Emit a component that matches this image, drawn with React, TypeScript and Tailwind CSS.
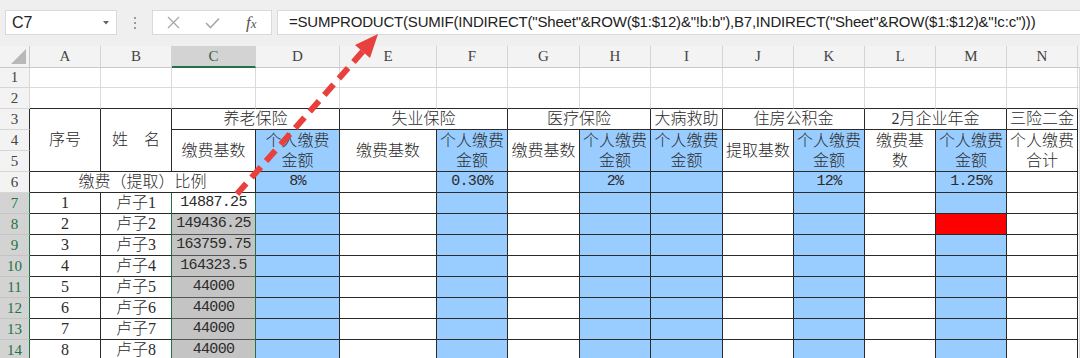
import React from 'react';
import { twMerge } from 'tailwind-merge';

const serifCjk = "font-['Liberation_Serif','Noto_Sans_CJK_SC',serif]";
const mono = "font-['Liberation_Mono','Noto_Sans_CJK_SC',monospace]";

const COLS = ['A', 'B', 'C', 'D', 'E', 'F', 'G', 'H', 'I', 'J', 'K', 'L', 'M', 'N'];

const data = [
  { n: '1', name: '卢子1', base: '14887.25' },
  { n: '2', name: '卢子2', base: '149436.25' },
  { n: '3', name: '卢子3', base: '163759.75' },
  { n: '4', name: '卢子4', base: '164323.5' },
  { n: '5', name: '卢子5', base: '44000' },
  { n: '6', name: '卢子6', base: '44000' },
  { n: '7', name: '卢子7', base: '44000' },
  { n: '8', name: '卢子8', base: '44000' },
];

function Cell({ className, children }: { className?: string; children?: React.ReactNode }) {
  return (
    <div
      className={twMerge(
        'flex flex-col items-center justify-center overflow-hidden whitespace-nowrap border-r border-b border-[#2a2a2a] text-[16px] font-light leading-[20px] text-[#2b2b2b]',
        serifCjk,
        className,
      )}
    >
      {children}
    </div>
  );
}

function RowHead({ n, active }: { n: number; active?: boolean }) {
  return (
    <div
      className={twMerge(
        "flex items-center justify-center border-r border-b border-[#d6d6d6] bg-[#f3f3f3] text-[15px] text-[#444] font-['Liberation_Serif',serif]",
        n >= 3 && n <= 6 && 'border-r-[#2a2a2a]',
        active && 'bg-[#d3d3d3] text-[#217346] border-r-[#217346] border-b-[#c4c4c4]',
      )}
    >
      {n}
    </div>
  );
}

function Toolbar() {
  return (
    <div className="flex h-[46px] items-start bg-[#efefef] pt-[10px] pl-[5px]">
      <div className="flex h-[25px] w-[112px] items-center justify-between border border-[#d9d9d9] bg-white pl-[6px] pr-[7px]">
        <span className="font-['Liberation_Sans',sans-serif] text-[16px] text-[#222]">C7</span>
        <svg width="6" height="4" viewBox="0 0 6 4">
          <path d="M0 0 L6 0 L3 3.5 Z" fill="#666" />
        </svg>
      </div>
      <div className="flex h-[25px] w-[35px] flex-col items-center justify-center gap-[3px]">
        <span className="h-[2px] w-[2px] bg-[#9a9a9a]" />
        <span className="h-[2px] w-[2px] bg-[#9a9a9a]" />
        <span className="h-[2px] w-[2px] bg-[#9a9a9a]" />
      </div>
      <div className="flex h-[25px] w-[120px] items-center border border-[#d9d9d9] bg-white">
        <div className="flex w-[40px] justify-center pl-[1px]">
          <svg width="13" height="13" viewBox="0 0 13 13">
            <path d="M1 1 L12 12 M12 1 L1 12" stroke="#a8a8a8" strokeWidth="1.3" fill="none" />
          </svg>
        </div>
        <div className="flex w-[40px] justify-center">
          <svg width="15" height="12" viewBox="0 0 15 12">
            <path d="M1 6 L5.5 10.5 L14 1.5" stroke="#a8a8a8" strokeWidth="1.6" fill="none" />
          </svg>
        </div>
        <div className="flex w-[40px] justify-center">
          <span className="font-['Liberation_Serif',serif] text-[17px] italic text-[#555]">
            f<span className="text-[13px]">x</span>
          </span>
        </div>
      </div>
      <div className="ml-[5px] flex h-[25px] flex-1 items-center border border-[#d9d9d9] border-r-0 bg-white pl-[11px]">
        <span className="whitespace-nowrap font-['Liberation_Sans',sans-serif] text-[15px] tracking-[-0.2px] text-[#222]">
          =SUMPRODUCT(SUMIF(INDIRECT("Sheet"&ROW($1:$12)&"!b:b"),B7,INDIRECT("Sheet"&ROW($1:$12)&"!c:c")))
        </span>
      </div>
    </div>
  );
}

function Arrow() {
  return (
    <svg className="pointer-events-none absolute left-0 top-0" width="1080" height="358" viewBox="0 0 1080 358">
      <line x1="237" y1="194" x2="364" y2="50" stroke="#e8403d" strokeWidth="6" strokeDasharray="14 8" />
      <polygon points="378,34 370,58 355,45" fill="#e8403d" />
    </svg>
  );
}

export default function App() {
  const light = 'border-[#dadada]';
  const blue = 'bg-[#99ccff]';
  const num = 'text-[15px] tracking-[-0.7px] font-normal';

  return (
    <div className="relative h-[358px] w-[1080px] overflow-hidden bg-white">
      <Toolbar />
      <div className="grid grid-cols-[30px_71px_71px_84px_84px_97px_71px_72px_71px_72px_71px_71px_71px_71px_71px_1fr] grid-rows-[22px_20px_21px_repeat(12,21px)]">
        {/* column headers */}
        <div className="relative border-r border-b border-[#c8c8c8] bg-[#f3f3f3]">
          <svg className="absolute bottom-[3px] right-[3px]" width="15" height="15" viewBox="0 0 15 15">
            <polygon points="15,0 15,15 0,15" fill="#b8b8b8" />
          </svg>
        </div>
        {COLS.map((c) => (
          <div
            key={c}
            className={twMerge(
              "flex items-center justify-center border-r border-b border-[#d4d4d4] border-b-[#c8c8c8] bg-[#f3f3f3] font-['Liberation_Serif',serif] text-[15px] text-[#444]",
              c === 'C' && 'border-b-2 border-b-[#217346] bg-[#d3d3d3] text-[#3b5e48]',
            )}
          >
            {c}
          </div>
        ))}
        <div className="border-b border-[#c8c8c8] bg-[#f3f3f3]" />

        {/* rows 1-2 */}
        {[1, 2].map((r) => (
          <React.Fragment key={r}>
            <RowHead n={r} />
            {COLS.map((c) => (
              <Cell key={c} className={twMerge(light, r === 2 && 'border-b-[#2a2a2a]')} />
            ))}
            <Cell className={light} />
          </React.Fragment>
        ))}

        {/* row 3 */}
        <RowHead n={3} />
        <Cell className="row-span-3">序号</Cell>
        <Cell className="row-span-3">{'姓\u3000名'}</Cell>
        <Cell className="col-span-2">养老保险</Cell>
        <Cell className="col-span-2">失业保险</Cell>
        <Cell className="col-span-2">医疗保险</Cell>
        <Cell>大病救助</Cell>
        <Cell className="col-span-2">住房公积金</Cell>
        <Cell className="col-span-2">2月企业年金</Cell>
        <Cell>三险二金</Cell>
        <Cell className={light} />

        {/* rows 4-5 */}
        <RowHead n={4} />
        <Cell className="row-span-2">缴费基数</Cell>
        <Cell className={twMerge('row-span-2', blue)}>
          <span>个人缴费</span>
          <span>金额</span>
        </Cell>
        <Cell className="row-span-2">缴费基数</Cell>
        <Cell className={twMerge('row-span-2', blue)}>
          <span>个人缴费</span>
          <span>金额</span>
        </Cell>
        <Cell className="row-span-2">缴费基数</Cell>
        <Cell className={twMerge('row-span-2', blue)}>
          <span>个人缴费</span>
          <span>金额</span>
        </Cell>
        <Cell className={twMerge('row-span-2', blue)}>
          <span>个人缴费</span>
          <span>金额</span>
        </Cell>
        <Cell className="row-span-2">提取基数</Cell>
        <Cell className={twMerge('row-span-2', blue)}>
          <span>个人缴费</span>
          <span>金额</span>
        </Cell>
        <Cell className="row-span-2">
          <span>缴费基</span>
          <span>数</span>
        </Cell>
        <Cell className={twMerge('row-span-2', blue)}>
          <span>个人缴费</span>
          <span>金额</span>
        </Cell>
        <Cell className="row-span-2">
          <span>个人缴费</span>
          <span>合计</span>
        </Cell>
        <Cell className={light} />
        <RowHead n={5} />
        <Cell className={light} />

        {/* row 6 */}
        <RowHead n={6} />
        <Cell className="col-span-3">缴费（提取）比例</Cell>
        <Cell className={twMerge(blue, mono, num)}>8%</Cell>
        <Cell />
        <Cell className={twMerge(blue, mono, num)}>0.30%</Cell>
        <Cell />
        <Cell className={twMerge(blue, mono, num)}>2%</Cell>
        <Cell className={blue} />
        <Cell />
        <Cell className={twMerge(blue, mono, num)}>12%</Cell>
        <Cell />
        <Cell className={twMerge(blue, mono, num)}>1.25%</Cell>
        <Cell />
        <Cell className={light} />

        {/* rows 7-14 */}
        {data.map((d, i) => (
          <React.Fragment key={d.n}>
            <RowHead n={i + 7} active />
            <Cell>{d.n}</Cell>
            <Cell className="border-r-[#217346]">{d.name}</Cell>
            <Cell
              className={twMerge(
                mono,
                num,
                'border-r-[#217346]',
                i === 0 ? 'bg-white' : 'bg-[#c4c4c4] border-b-[#555]',
              )}
            >
              {d.base}
            </Cell>
            <Cell className={blue} />
            <Cell />
            <Cell className={blue} />
            <Cell />
            <Cell className={blue} />
            <Cell className={blue} />
            <Cell />
            <Cell className={blue} />
            <Cell />
            <Cell className={i === 1 ? 'bg-[#ff0000]' : blue} />
            <Cell />
            <Cell className={light} />
          </React.Fragment>
        ))}
      </div>
      <Arrow />
    </div>
  );
}
